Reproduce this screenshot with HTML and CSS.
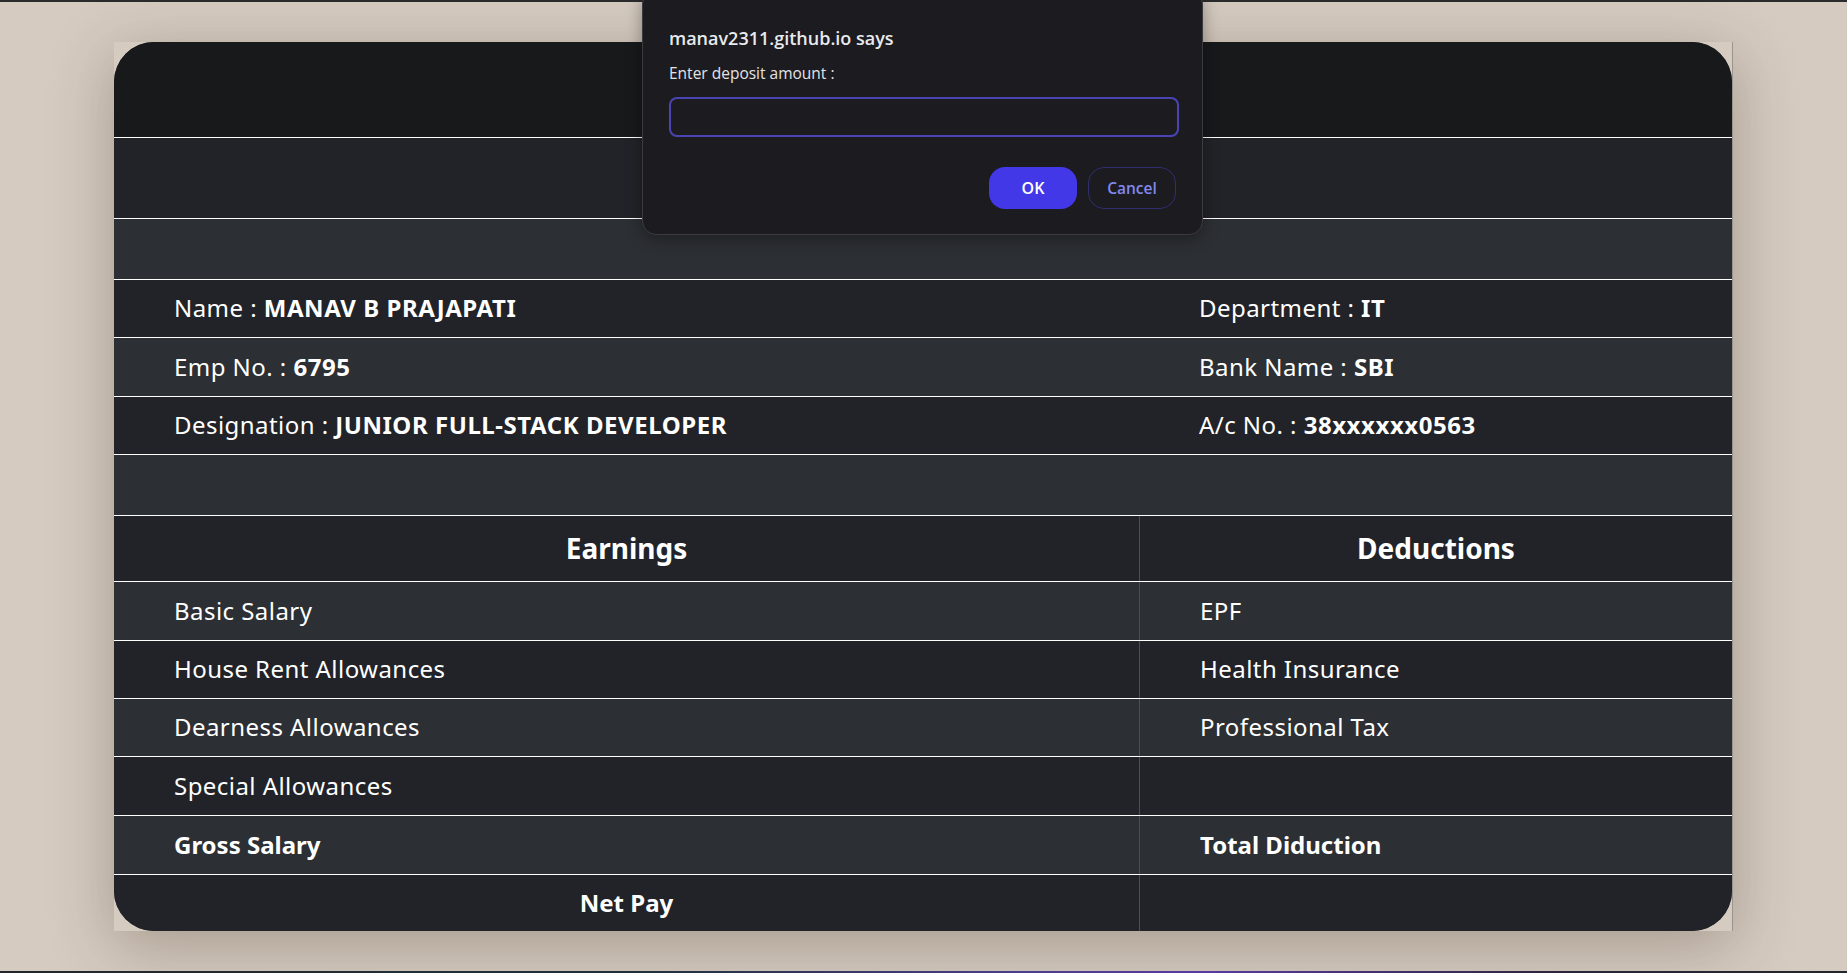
FILE: index.html
```html
<!DOCTYPE html>
<html lang="en">
<head>
<meta charset="utf-8">
<title>Salary Slip</title>
<link rel="stylesheet" href="styles.css">
</head>
<body>
<div class="topbar"></div>
<main class="page">
  <div class="card">
    <div class="sheet">
      <div class="row head"></div>
      <div class="row r2"></div>
      <div class="row r3"></div>
      <div class="row info dark h58">
        <div class="cell">Name :&nbsp;<b>MANAV B PRAJAPATI</b></div>
        <div class="cell">Department :&nbsp;<b>IT</b></div>
      </div>
      <div class="row info light h59">
        <div class="cell">Emp No. :&nbsp;<b>6795</b></div>
        <div class="cell">Bank Name :&nbsp;<b>SBI</b></div>
      </div>
      <div class="row info dark h58">
        <div class="cell">Designation :&nbsp;<b>JUNIOR FULL-STACK DEVELOPER</b></div>
        <div class="cell">A/c No. :&nbsp;<b>38xxxxxx0563</b></div>
      </div>
      <div class="row blank light"></div>
      <div class="row titles dark">
        <div class="cell center heading">Earnings</div>
        <div class="cell center heading split">Deductions</div>
      </div>
      <div class="row light h59">
        <div class="cell">Basic Salary</div>
        <div class="cell split">EPF</div>
      </div>
      <div class="row dark h58">
        <div class="cell">House Rent Allowances</div>
        <div class="cell split">Health Insurance</div>
      </div>
      <div class="row light h58">
        <div class="cell">Dearness Allowances</div>
        <div class="cell split">Professional Tax</div>
      </div>
      <div class="row dark h59">
        <div class="cell">Special Allowances</div>
        <div class="cell split"></div>
      </div>
      <div class="row light h59">
        <div class="cell strong">Gross Salary</div>
        <div class="cell split strong">Total Diduction</div>
      </div>
      <div class="row dark last">
        <div class="cell center strong">Net Pay</div>
        <div class="cell split"></div>
      </div>
    </div>
  </div>
</main>
<div class="bottombar"></div>

<div class="dialog">
  <div class="dlg-title">manav2311.github.io says</div>
  <div class="dlg-msg">Enter deposit amount :</div>
  <input class="dlg-input" type="text">
  <div class="dlg-actions">
    <button class="btn ok">OK</button>
    <button class="btn cancel">Cancel</button>
  </div>
</div>
</body>
</html>
```

FILE: styles.css
```css
* { box-sizing: border-box; }

html, body {
  margin: 0;
  padding: 0;
  height: 973px;
  overflow: hidden;
}

body {
  background: #d5cbc1;
  font-family: "Noto Sans", "Open Sans", sans-serif;
  color: #ffffff;
  position: relative;
}

.topbar {
  height: 2px;
  background: #2b2b2d;
}

.bottombar {
  height: 2px;
  background: linear-gradient(90deg, #22262a 0%, #22303a 35%, #4a3d8a 55%, #5a3aa0 65%, #2a2438 85%, #22262a 100%);
}

.page {
  height: 969px;
  padding-top: 40px;
}

.card {
  width: 1619px;
  height: 889px;
  margin: 0 auto;
  background: #d5cbc1;
  box-shadow: 0 14px 60px rgba(60, 40, 20, 0.3);
  border-right: 1px solid #9a948e;
}

.sheet {
  height: 889px;
  border-radius: 40px;
  overflow: hidden;
  display: flex;
  flex-direction: column;
  background: #212328;
}

.row {
  display: grid;
  grid-template-columns: 1025px 1fr;
  border-top: 1px solid #ffffff;
  flex: none;
}

.head { height: 95px; background: #18191b; border-top: none; }
.r2 { height: 81px; background: #212328; }
.r3 { height: 61px; background: #2c2f34; }

.dark { background: #212328; }
.light { background: #2c2f34; }

.h58 { height: 58px; }
.h59 { height: 59px; }
.blank { height: 61px; }
.titles { height: 66px; }
.last { height: 57px; }

.cell {
  display: flex;
  align-items: center;
  padding-left: 60px;
  padding-bottom: 2px;
  font-size: 24px;
  letter-spacing: 0.45px;
  font-weight: 400;
  white-space: nowrap;
}

.cell b { font-weight: 700; letter-spacing: 0.55px; }

.split { border-left: 1px solid #4b4e55; }

.center {
  justify-content: center;
  padding-left: 0;
}

.heading {
  font-size: 28px;
  font-weight: 700;
  letter-spacing: 0;
}

.strong { font-weight: 700; letter-spacing: 0; }

/* Browser prompt dialog overlay */
.dialog {
  position: absolute;
  top: -10px;
  left: 642px;
  width: 561px;
  height: 245px;
  padding: 10px 25px 0 26px;
  background: #1c1b20;
  border: 1px solid #3b3b40;
  border-radius: 14px;
  box-shadow: 0 4px 16px rgba(0, 0, 0, 0.35);
  font-family: "Open Sans", "Noto Sans", sans-serif;
  display: flex;
  flex-direction: column;
}

.dlg-title {
  margin-top: 25px;
  font-size: 18px;
  font-weight: 600;
  line-height: 24px;
  color: #e8eaed;
}

.dlg-msg {
  margin-top: 13px;
  font-size: 15.5px;
  line-height: 20px;
  color: #e3e3e6;
}

.dlg-input {
  margin-top: 14px;
  width: 510px;
  height: 40px;
  background: #1c1b20;
  border: 2px solid #4a44b3;
  border-radius: 8px;
  outline: none;
}

.dlg-actions {
  margin-top: 30px;
  display: flex;
  justify-content: flex-end;
  gap: 11px;
  padding-right: 1px;
}

.btn {
  height: 42px;
  border-radius: 16px;
  font-family: "Open Sans", "Noto Sans", sans-serif;
  font-size: 15.5px;
  font-weight: 600;
  cursor: pointer;
  padding: 0;
}

.ok {
  width: 88px;
  background: #4338e8;
  border: none;
  color: #ffffff;
  font-size: 16px;
}

.cancel {
  width: 88px;
  background: transparent;
  border: 1px solid #2f2e6e;
  color: #8189ef;
}
```
